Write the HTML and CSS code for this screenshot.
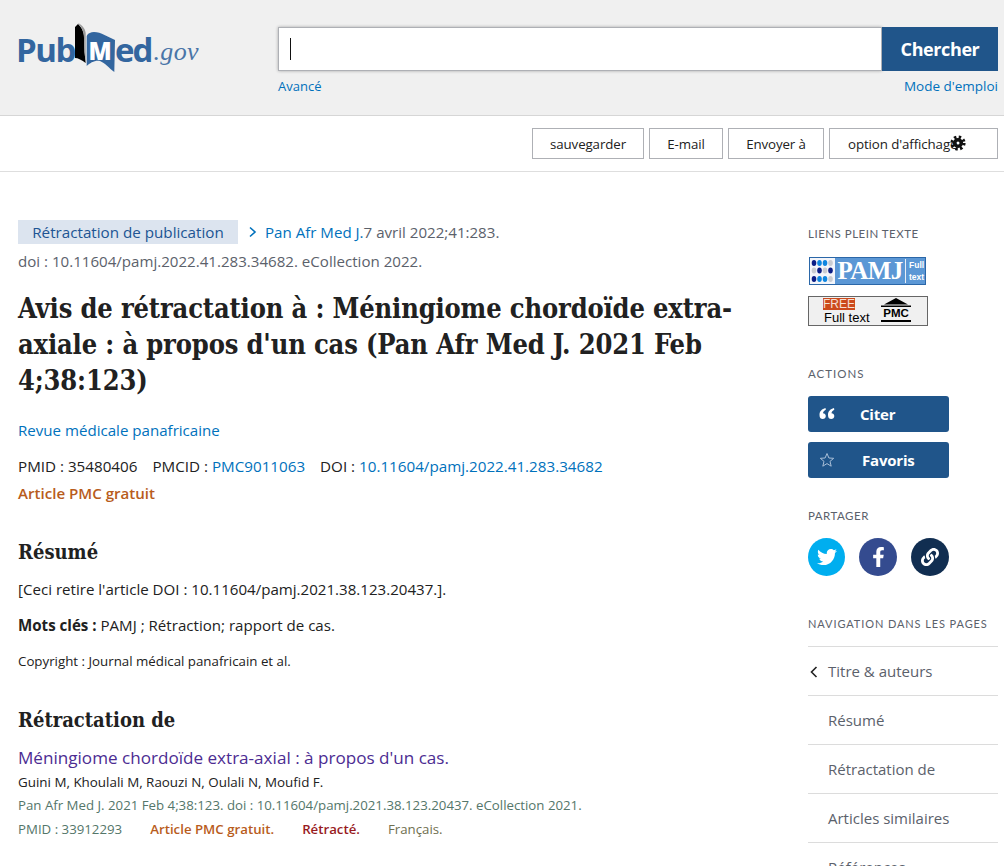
FILE: index.html
```html
<!DOCTYPE html>
<html lang="fr">
<head>
<meta charset="utf-8">
<title>PubMed</title>
<link rel="stylesheet" href="styles.css">
</head>
<body>
<header class="masthead">
  <div class="logo">
    <span class="logo-word logo-pub">Pub</span>
    <svg class="logo-book" width="42" height="52" viewBox="0 0 42 52">
      <path d="M1 5 L4 2 C8 6 10 10 10 16 L10.500 30 L11.700 41 C8 38 4 36 1 36 Z" fill="#000"/>
      <path d="M4 1 C8 3 11 6 11.700 11 L11.700 41 L10.500 30 L10 16 C10 10 8 6 4 1 Z" fill="#9a9a9a"/>
      <path d="M12.700 14 C14 11 17 10 20 10 C27 10 34 15 41 18 L40.300 50 C35 46 31 41 26 39 C21 38 16 41 12.700 44 Z" fill="#33669f"/>
      <text class="logo-m" x="14.500" y="38">M</text>
    </svg>
    <span class="logo-word logo-ed">ed</span>
    <span class="logo-gov">.gov</span>
  </div>
  <div class="search">
    <div class="search-row">
      <div class="search-input"><span class="caret"></span></div>
      <button class="search-btn">Chercher</button>
    </div>
    <div class="search-links">
      <a href="#">Avancé</a>
      <a href="#" class="help">Mode d'emploi</a>
    </div>
  </div>
</header>
<nav class="toolbar">
  <button class="tool">sauvegarder</button>
  <button class="tool">E-mail</button>
  <button class="tool">Envoyer à</button>
  <button class="tool tool-wide">option d'affichage
    <svg class="gear" width="16" height="16" viewBox="0 0 16 16">
      <circle cx="8" cy="8" r="6" fill="none" stroke="#111" stroke-width="3.200" stroke-dasharray="2.356 2.356"/>
      <circle cx="8" cy="8" r="3.300" fill="none" stroke="#111" stroke-width="3.600"/>
    </svg>
  </button>
</nav>
<div class="page">
  <main class="article">
    <div class="meta-top">
      <span class="tag">Rétractation de publication</span>
      <svg class="chev" width="10" height="12" viewBox="0 0 10 12"><path d="M2 1.500 L7 6 L2 10.500" fill="none" stroke="#0071bc" stroke-width="1.600"/></svg>
      <a href="#" class="journal">Pan Afr Med J.</a><span class="muted">7 avril 2022;41:283.</span>
    </div>
    <p class="muted doi-line">doi : 10.11604/pamj.2022.41.283.34682. eCollection 2022.</p>
    <h1>Avis de rétractation à : Méningiome chordoïde extra-axiale : à propos d'un cas (Pan Afr Med J. 2021 Feb 4;38:123)</h1>
    <p class="journal-name"><a href="#">Revue médicale panafricaine</a></p>
    <p class="ids"><span>PMID : 35480406</span><span>PMCID : <a href="#">PMC9011063</a></span><span>DOI : <a href="#">10.11604/pamj.2022.41.283.34682</a></span></p>
    <p class="free">Article PMC gratuit</p>
    <h2 class="h-abstract">Résumé</h2>
    <p class="para">[Ceci retire l'article DOI : 10.11604/pamj.2021.38.123.20437.].</p>
    <p class="para keywords"><strong>Mots clés :</strong> PAMJ ; Rétraction; rapport de cas.</p>
    <p class="copyright">Copyright : Journal médical panafricain et al.</p>
    <h2 class="h-retract">Rétractation de</h2>
    <a href="#" class="ref-title">Méningiome chordoïde extra-axial : à propos d'un cas.</a>
    <p class="ref-authors">Guini M, Khoulali M, Raouzi N, Oulali N, Moufid F.</p>
    <p class="ref-cite">Pan Afr Med J. 2021 Feb 4;38:123. doi : 10.11604/pamj.2021.38.123.20437. eCollection 2021.</p>
    <p class="ref-meta"><span>PMID : 33912293</span><span class="free-sm">Article PMC gratuit.</span><span class="retracted">Rétracté.</span><span class="lang">Français.</span></p>
  </main>
  <aside class="side">
    <h3 class="side-title side-links">Liens plein texte</h3>
    <div class="pamj">
      <svg class="pamj-dots" width="25" height="26" viewBox="0 0 25 26">
        <rect width="25" height="26" fill="#f3f5fa"/>
        <g fill="#0a1d85">
          <ellipse cx="4" cy="5" rx="2.300" ry="3"/><ellipse cx="9.500" cy="12.500" rx="2.300" ry="3"/><ellipse cx="20.500" cy="12.500" rx="2.300" ry="3"/><ellipse cx="4" cy="21" rx="2.300" ry="3"/>
        </g>
        <g fill="#0d86e0">
          <ellipse cx="9.500" cy="5" rx="2.300" ry="3"/><ellipse cx="15" cy="5" rx="2.300" ry="3"/><ellipse cx="9.500" cy="21" rx="2.300" ry="3"/><ellipse cx="15" cy="21" rx="2.300" ry="3"/>
        </g>
        <g fill="#c9ccd2">
          <ellipse cx="20.500" cy="5" rx="2.300" ry="3"/><ellipse cx="4" cy="12.500" rx="2.300" ry="3"/><ellipse cx="15" cy="12.500" rx="2.300" ry="3"/><ellipse cx="20.500" cy="21" rx="2.300" ry="3"/>
        </g>
      </svg>
      <span class="pamj-name">PAMJ</span>
      <span class="pamj-full">Full<br>text</span>
    </div>
    <div class="pmc">
      <div class="pmc-left"><span class="pmc-free">FREE</span><span class="pmc-full">Full text</span></div>
      <div class="pmc-right">
        <svg width="30" height="9" viewBox="0 0 30 9"><path d="M15 0 L27 6.500 L3 6.500 Z M0 7.500 H30 V9 H0 Z" fill="#000"/></svg>
        <span class="pmc-word">PMC</span>
      </div>
    </div>

    <h3 class="side-title side-actions">Actions</h3>
    <button class="action">
      <svg class="action-icon" width="16" height="12" viewBox="0 0 16 12"><path d="M6.500 0 C3 1 .5 3 .5 7 C.5 10 2 11 3.700 11 C5.500 11 6.800 9.800 6.800 8 C6.800 6.300 5.500 5.200 4 5.200 C4.100 3.800 5.200 2.500 6.800 1.800 Z M15 0 C11.500 1 9 3 9 7 C9 10 10.500 11 12.200 11 C14 11 15.300 9.800 15.300 8 C15.300 6.300 14 5.200 12.500 5.200 C12.600 3.800 13.700 2.500 15.300 1.800 Z" fill="#fff"/></svg>
      <span class="action-label">Citer</span>
    </button>
    <button class="action">
      <svg class="action-icon" width="16" height="16" viewBox="0 0 16 16"><path d="M8 1.500 L9.900 6 L14.700 6.300 L11 9.400 L12.200 14.200 L8 11.600 L3.800 14.200 L5 9.400 L1.300 6.300 L6.100 6 Z" fill="none" stroke="#a9bfd8" stroke-width="1"/></svg>
      <span class="action-label">Favoris</span>
    </button>

    <h3 class="side-title side-share">Partager</h3>
    <div class="share">
      <span class="circle tw"><svg width="20" height="20" viewBox="0 0 512 512"><path fill="#fff" d="M459.37 151.716c.325 4.548.325 9.097.325 13.645 0 138.72-105.583 298.558-298.558 298.558-59.452 0-114.68-17.219-161.137-47.106 8.447.974 16.568 1.299 25.34 1.299 49.055 0 94.213-16.568 130.274-44.832-46.132-.975-84.792-31.188-98.112-72.772 6.498.974 12.995 1.624 19.818 1.624 9.421 0 18.843-1.3 27.614-3.573-48.081-9.747-84.143-51.98-84.143-102.985v-1.299c13.969 7.797 30.214 12.67 47.431 13.319-28.264-18.843-46.781-51.005-46.781-87.391 0-19.492 5.197-37.36 14.294-52.954 51.655 63.675 129.3 105.258 216.365 109.807-1.624-7.797-2.599-15.918-2.599-24.04 0-57.828 46.782-104.934 104.934-104.934 30.213 0 57.502 12.67 76.67 33.137 23.715-4.548 46.456-13.32 66.599-25.34-7.798 24.366-24.366 44.833-46.132 57.827 21.117-2.273 41.584-8.122 60.426-16.243-14.292 20.791-32.161 39.308-52.628 54.253z"/></svg></span>
      <span class="circle fb"><svg width="13" height="20" viewBox="0 0 320 512"><path fill="#fff" d="M279.14 288l14.22-92.66h-88.91v-60.13c0-25.35 12.42-50.06 52.24-50.06h40.42V6.26S260.43 0 225.36 0c-73.22 0-121.08 44.38-121.08 124.72v70.62H22.89V288h81.39v224h100.17V288z"/></svg></span>
      <span class="circle ln"><svg width="18" height="18" viewBox="0 0 512 512"><path fill="#fff" d="M326.612 185.391c59.747 59.809 58.927 155.698.36 214.59-.11.12-.24.25-.36.37l-67.2 67.2c-59.27 59.27-155.699 59.262-214.96 0-59.27-59.26-59.27-155.7 0-214.96l37.106-37.106c9.84-9.84 26.786-3.3 27.294 10.606.648 17.722 3.826 35.527 9.69 52.721 1.986 5.822.567 12.262-3.783 16.612l-13.087 13.087c-28.026 28.026-28.905 73.66-1.155 101.96 28.024 28.579 74.086 28.749 102.325.51l67.2-67.19c28.191-28.191 28.073-73.757 0-101.83-3.701-3.694-7.429-6.564-10.341-8.569a16.037 16.037 0 0 1-6.947-12.606c-.396-10.567 3.348-21.456 11.698-29.806l21.054-21.055c5.521-5.521 14.182-6.199 20.584-1.731a152.482 152.482 0 0 1 20.522 17.197zM467.547 44.449c-59.261-59.262-155.69-59.27-214.96 0l-67.2 67.2c-.12.12-.25.25-.36.37-58.566 58.892-59.387 154.781.36 214.59a152.454 152.454 0 0 0 20.521 17.196c6.402 4.468 15.064 3.789 20.584-1.731l21.054-21.055c8.35-8.35 12.094-19.239 11.698-29.806a16.037 16.037 0 0 0-6.947-12.606c-2.912-2.005-6.64-4.875-10.341-8.569-28.073-28.073-28.191-73.639 0-101.83l67.2-67.19c28.239-28.239 74.3-28.069 102.325.51 27.75 28.3 26.872 73.934-1.155 101.96l-13.087 13.087c-4.35 4.35-5.769 10.79-3.783 16.612 5.864 17.194 9.042 34.999 9.69 52.721.509 13.906 17.454 20.446 27.294 10.606l37.106-37.106c59.271-59.259 59.271-155.699.001-214.959z"/></svg></span>
    </div>

    <h3 class="side-title side-nav">Navigation dans les pages</h3>
    <ul class="pagenav">
      <li><svg class="nav-chev" width="10" height="12" viewBox="0 0 10 12"><path d="M7.500 1 L2.500 6 L7.500 11" fill="none" stroke="#212121" stroke-width="1.600"/></svg>Titre &amp; auteurs</li>
      <li>Résumé</li>
      <li>Rétractation de</li>
      <li>Articles similaires</li>
      <li>Références</li>
    </ul>
  </aside>
</div>
</body>
</html>
```
FILE: styles.css
```css
* { box-sizing: border-box; }
html, body { margin: 0; height: 866px; overflow: hidden; background: #fff; }
body { font-family: "Open Sans", "Noto Sans", sans-serif; font-size: 15.1px; color: #212121; }
a { color: #0071bc; text-decoration: none; }
p { margin: 0; }

.masthead { height: 116px; background: #f0f0f0; border-bottom: 1px solid #d6d6d6; display: flex; padding: 22px 6px 0 18px; }
.logo { width: 260px; height: 52px; display: flex; align-items: flex-start; }
.logo-word { font-family: "Open Sans", sans-serif; font-weight: 700; font-size: 33px; line-height: 33px; color: #33669f; margin-top: 11px; }
.logo-pub { width: 60px; margin-left: -2px; letter-spacing: -1.500px; }
.logo-ed { margin-left: -1px; letter-spacing: -2px; }
.logo-book { margin-left: -2px; flex: none; }
.logo-m { font-family: "Open Sans", sans-serif; font-weight: 800; font-size: 24px; fill: #fff; }
.logo-gov { font-family: "Liberation Serif", serif; font-style: italic; font-size: 26px; line-height: 32px; color: #4a75a8; margin-top: 14px; margin-left: 2px; letter-spacing: .4px; }

.search { width: 720px; padding-top: 5px; }
.search-row { display: flex; height: 44px; }
.search-input { flex: 1; background: #fff; border: 1px solid #aeb0b5; box-shadow: 0 0 3px rgba(0,0,0,.3); display: flex; align-items: center; padding-left: 11px; }
.caret { width: 1px; height: 22px; background: #111; }
.search-btn { width: 116px; border: 0; background: #20558a; color: #fff; font-family: "Open Sans", sans-serif; font-weight: 700; font-size: 18px; letter-spacing: -.4px; padding: 0; }
.search-links { display: flex; justify-content: space-between; margin-top: 6px; font-size: 13px; line-height: 18px; }
.help { font-size: 13.500px; }

.toolbar { height: 56px; border-bottom: 1px solid #dedede; display: flex; justify-content: flex-end; align-items: flex-start; gap: 5px; padding: 12px 6px 0 0; }
.tool { position: relative; height: 31px; padding: 0; border: 1px solid #aeb0b5; background: #fff; font-family: "Open Sans", sans-serif; font-size: 13.300px; color: #212121; letter-spacing: -.1px; white-space: nowrap; }
.tool:nth-child(1) { width: 112px; }
.tool:nth-child(2) { width: 74px; }
.tool:nth-child(3) { width: 96px; }
.tool-wide { width: 169px; text-align: left; padding: 0 0 0 18px; }
.gear { position: absolute; left: 120px; top: 6px; }

.page { display: flex; padding: 48px 6px 0 18px; justify-content: space-between; }
.article { width: 730px; }
.meta-top { display: flex; align-items: center; height: 24px; white-space: nowrap; }
.tag { width: 220px; height: 24px; line-height: 24px; text-align: center; background: #dce4ef; color: #205493; font-size: 15.200px; }
.chev { margin: 0 7px 0 10px; }
.muted { color: #5b616b; }
.doi-line { margin-top: 7px; line-height: 20px; }
h1, h2 { font-family: "DejaVu Serif", "Liberation Serif", serif; font-stretch: condensed; margin: 0; color: #212121; font-weight: 700; }
h1 { margin-top: 20px; font-size: 27px; line-height: 36px; letter-spacing: -.15px; }
.journal-name { margin-top: 21px; line-height: 20px; }
.ids { margin-top: 16px; line-height: 20px; display: flex; gap: 15px; font-size: 15.200px; }
.free { margin-top: 7px; line-height: 20px; font-weight: 600; color: #b85c1c; }
h2 { font-size: 20px; line-height: 28px; }
.h-abstract { margin-top: 35px; }
.para { line-height: 20px; }
.h-abstract + .para { margin-top: 13px; }
.keywords { margin-top: 16px; }
.copyright { margin-top: 16px; line-height: 20px; font-size: 13.300px; }
.h-retract { margin-top: 35px; }
.ref-title { display: block; margin-top: 12px; font-size: 17.100px; line-height: 24px; color: #4c2c92; }
.ref-authors { font-size: 13.400px; line-height: 18px; margin-top: 3px; }
.ref-cite { font-size: 13.250px; line-height: 18px; margin-top: 5px; color: #54766a; }
.ref-meta { font-size: 13.250px; line-height: 18px; margin-top: 6px; color: #54766a; display: flex; gap: 28px; }
.free-sm { color: #b85c1c; font-weight: 600; }
.retracted { color: #981b1e; font-weight: 600; }
.lang { color: #6f6f50; }

.side { width: 190px; }
.side-title { margin: 0; font-family: Lato, sans-serif; font-weight: 400; font-size: 11.500px; line-height: 16px; letter-spacing: 1px; text-transform: uppercase; color: #5b616b; white-space: nowrap; }
.side-links { margin-top: 6px; letter-spacing: .5px; }
.pamj { margin: 15px 0 0 1px; width: 117px; height: 28px; background: #5b97d5; border: 1px solid #2b67a8; display: flex; align-items: center; color: #fff; }
.pamj-dots { flex: none; }
.pamj-name { font-family: "Liberation Serif", serif; font-weight: 700; font-size: 25px; letter-spacing: -.6px; line-height: 26px; width: 70px; text-align: center; }
.pamj-full { border-left: 1px solid #e8eef6; height: 24px; font-family: "Liberation Sans", sans-serif; font-size: 8.500px; font-weight: 700; line-height: 12px; padding-left: 3px; }
.pmc { margin-top: 11px; width: 120px; height: 30px; background: #f0f0f0; border: 1px solid #666; display: flex; color: #000; }
.pmc-left { width: 72px; padding: 1px 0 0 14px; display: flex; flex-direction: column; font-family: "Liberation Sans", sans-serif; }
.pmc-free { width: 32px; height: 12px; flex: none; background: #cc4a1c; color: #f5e0d5; font-size: 12px; line-height: 12px; text-align: center; }
.pmc-full { font-size: 13px; line-height: 15px; margin-left: 1px; white-space: nowrap; }
.pmc-right { width: 30px; padding-top: 1px; display: flex; flex-direction: column; align-items: center; }
.pmc-right svg { display: block; flex: none; }
.pmc-word { font-family: "Liberation Sans", sans-serif; font-weight: 700; font-size: 11.500px; line-height: 13px; height: 15px; border-bottom: 2px solid #000; width: 30px; text-align: center; }

.side-actions { margin-top: 40px; }
.action { display: flex; align-items: center; width: 141px; height: 36px; margin-top: 10px; background: #20558a; border: 0; border-radius: 3px; color: #fff; padding: 0 0 0 11px; font-family: "Open Sans", sans-serif; font-weight: 700; font-size: 15px; letter-spacing: -.2px; }
.side-actions + .action { margin-top: 14px; }
.action-icon { flex: none; width: 16px; }
.action-label { margin-left: 25px; }
.action:nth-of-type(2) .action-label { margin-left: 27px; }
.side-share { margin-top: 30px; letter-spacing: .5px; }
.share { display: flex; justify-content: space-between; width: 141px; margin-top: 14px; }
.circle { width: 38px; height: 38px; border-radius: 50%; display: flex; align-items: center; justify-content: center; }
.tw { background: #00aeef; width: 37px; }
.fb { background: #344b8f; }
.ln { background: #112e51; }
.side-nav { margin-top: 40px; font-size: 11px; letter-spacing: .9px; }
.pagenav { list-style: none; margin: 14px 0 0; padding: 0; border-top: 1px solid #dcdcdc; }
.pagenav li { position: relative; height: 49px; line-height: 48px; padding-left: 20px; border-bottom: 1px solid #dcdcdc; font-size: 15px; color: #5b616b; }
.nav-chev { position: absolute; left: 1px; top: 19px; }
```
